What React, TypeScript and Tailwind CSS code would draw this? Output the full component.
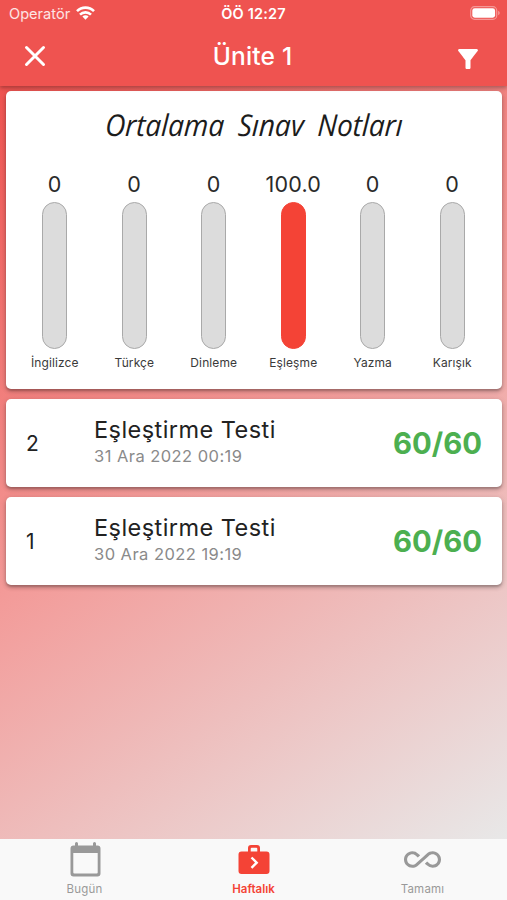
import { MdAllInclusive, MdFilterAlt } from "react-icons/md";

const scores = [
  { label: "İngilizce", value: "0" },
  { label: "Türkçe", value: "0" },
  { label: "Dinleme", value: "0" },
  { label: "Eşleşme", value: "100.0" },
  { label: "Yazma", value: "0" },
  { label: "Karışık", value: "0" },
];

const tests = [
  { no: 2, name: "Eşleştirme Testi", date: "31 Ara 2022 00:19", score: "60/60" },
  { no: 1, name: "Eşleştirme Testi", date: "30 Ara 2022 19:19", score: "60/60" },
];

const cardShadow =
  "shadow-[0_2px_2px_rgba(0,0,0,0.16),0_3px_4px_rgba(0,0,0,0.14),0_1px_6px_rgba(0,0,0,0.14)]";

function StatusBar() {
  return (
    <div className="grid h-7 grid-cols-3 items-center pl-[9px] pr-[6px] text-white">
      <div className="flex items-center gap-[6px]">
        <span className="text-[14.6px] leading-none text-white/85">Operatör</span>
        <svg className="-mt-[2px]" width="19" height="14" viewBox="0 0 19 14" fill="none" stroke="white" strokeWidth="2.6">
          <path d="M1 5.2a12 12 0 0 1 17 0" />
          <path d="M4 8.6a7.8 7.8 0 0 1 11 0" />
          <path d="M6.4 10.6a4.4 4.4 0 0 1 6.2 0L9.5 13.8z" fill="white" stroke="none" />
        </svg>
      </div>
      <div className="-ml-[3px] text-center text-[14.5px] font-semibold leading-none tracking-[0.2px]">
        ÖÖ 12:27
      </div>
      <div className="flex justify-end">
        <svg className="-mt-[2px]" width="31" height="14" viewBox="0 0 31 14">
          <rect x="0.7" y="0.7" width="26" height="12.6" rx="3.8" fill="none" stroke="white" strokeOpacity="0.4" strokeWidth="1.2" />
          <rect x="2.3" y="2.3" width="22.8" height="9.4" rx="2.4" fill="white" />
          <path d="M28.3 4.8v4.4c1.8-.8 1.8-3.6 0-4.4z" fill="white" fillOpacity="0.5" />
        </svg>
      </div>
    </div>
  );
}

function Header() {
  return (
    <header className="relative z-10 h-[86px] shrink-0 bg-[#ef5350] shadow-[0_2px_4px_rgba(0,0,0,0.3)]">
      <StatusBar />
      <div className="grid h-[56px] grid-cols-3 items-center pl-[24px] pr-[26px] text-white">
        <svg width="22" height="22" viewBox="0 0 22 22" stroke="white" strokeWidth="3" strokeLinecap="round">
          <path d="M2.500 2.500l17 17M19.500 2.500l-17 17" />
        </svg>
        <h1 className="text-center text-[24.5px] font-medium leading-none tracking-[0.2px]">
          Ünite 1
        </h1>
        <div className="flex justify-end pt-[6px]">
          <MdFilterAlt size={30} className="-mr-[2px]" />
        </div>
      </div>
    </header>
  );
}

function ScoreCard() {
  return (
    <section className={`h-[298px] rounded-[5px] bg-white ${cardShadow}`}>
      <h2 className="flex h-[68px] items-center justify-center whitespace-nowrap font-['Open_Sans',sans-serif] text-[30px] font-medium italic leading-none text-[#1c1c1c] [word-spacing:7px]">
        <span className="inline-block -skew-x-3 scale-x-[0.93]">Ortalama Sınav Notları</span>
      </h2>
      <div className="grid grid-cols-6 pl-[9px] pr-[10px] pt-[13px]">
        {scores.map((s) => (
          <div key={s.label} className="flex flex-col items-center">
            <span className="text-[21.5px] leading-6 tracking-[0.2px] text-[#2a2a2a]">{s.value}</span>
            <div
              className={`mt-[6px] h-[147px] w-[25px] rounded-full border ${
                s.value === "0" ? "border-[#a9a9a9] bg-[#dcdcdc]" : "border-[#f44336] bg-[#f44336]"
              }`}
            />
            <span className="mt-[5px] text-[12px] leading-[18px] tracking-[0.1px] text-[#3a3a3a]">
              {s.label}
            </span>
          </div>
        ))}
      </div>
    </section>
  );
}

function TestRow({ no, name, date, score }: (typeof tests)[number]) {
  return (
    <li className={`flex h-[88px] items-center rounded-[5px] bg-white pl-[20px] pr-[20px] ${cardShadow}`}>
      <span className="w-[68px] text-[21px] leading-none text-[#222]">{no}</span>
      <div className="flex-1 pb-[3px]">
        <p className="text-[23.5px] leading-[29px] tracking-[0.45px] text-[#222]">{name}</p>
        <p className="text-[16.5px] leading-6 tracking-[0.45px] text-[#8a8a8a]">{date}</p>
      </div>
      <span className="pt-px text-[29.3px] font-bold leading-none text-[#4caf50]">
        {score}
      </span>
    </li>
  );
}

function TabBar() {
  return (
    <nav className="grid h-[61px] shrink-0 grid-cols-3 bg-[#f9f9f9] text-[11.5px] leading-none text-[#999]">
      <div className="flex flex-col items-center">
        <svg className="ml-px mt-[3px]" width="31" height="35" viewBox="0 0 31 35" fill="#999">
          <path
            fillRule="evenodd"
            d="M5 1.500a1.500 1.500 0 0 1 3 0v2h15v-2a1.500 1.500 0 0 1 3 0v2h1.500a3 3 0 0 1 3 3v25a3 3 0 0 1-3 3h-24a3 3 0 0 1-3-3v-25a3 3 0 0 1 3-3h1.500zM3.300 11v19.500a1 1 0 0 0 1 1h22.400a1 1 0 0 0 1-1V11z"
          />
        </svg>
        <span className="mt-[7px] tracking-[0.25px]">Bugün</span>
      </div>
      <div className="flex flex-col items-center font-semibold text-[#f44336]">
        <svg className="mt-[6px]" width="32" height="30" viewBox="0 0 32 30">
          <path
            fill="#f44336"
            fillRule="evenodd"
            d="M10 6.500V3a3 3 0 0 1 3-3h6a3 3 0 0 1 3 3v3.500h6.500a3 3 0 0 1 3 3v16.500a3 3 0 0 1-3 3h-25a3 3 0 0 1-3-3V9.500a3 3 0 0 1 3-3zM12.700 6.500h6.600V3.800a1 1 0 0 0-1-1h-4.600a1 1 0 0 0-1 1z"
          />
          <path d="M13.500 12.500l5.200 5.200-5.200 5.200" fill="none" stroke="white" strokeWidth="2.4" />
        </svg>
        <span className="mt-[9px]">Haftalık</span>
      </div>
      <div className="flex flex-col items-center">
        <MdAllInclusive size={37} className="mt-[2px]" color="#999" />
        <span className="mt-[6px] tracking-[0.2px]">Tamamı</span>
      </div>
    </nav>
  );
}

export default function App() {
  return (
    <div className="flex h-[900px] w-[507px] flex-col overflow-hidden font-['Inter',sans-serif]">
      <Header />
      <main className="flex-1 bg-[linear-gradient(146deg,#ef5350_0%,#f39b99_47%,#e8e8e8_100%)] pl-[6px] pr-[5px] pt-[5px]">
        <ScoreCard />
        <ul className="mt-[10px] flex flex-col gap-[10px]">
          {tests.map((t) => (
            <TestRow key={t.no} {...t} />
          ))}
        </ul>
      </main>
      <TabBar />
    </div>
  );
}
